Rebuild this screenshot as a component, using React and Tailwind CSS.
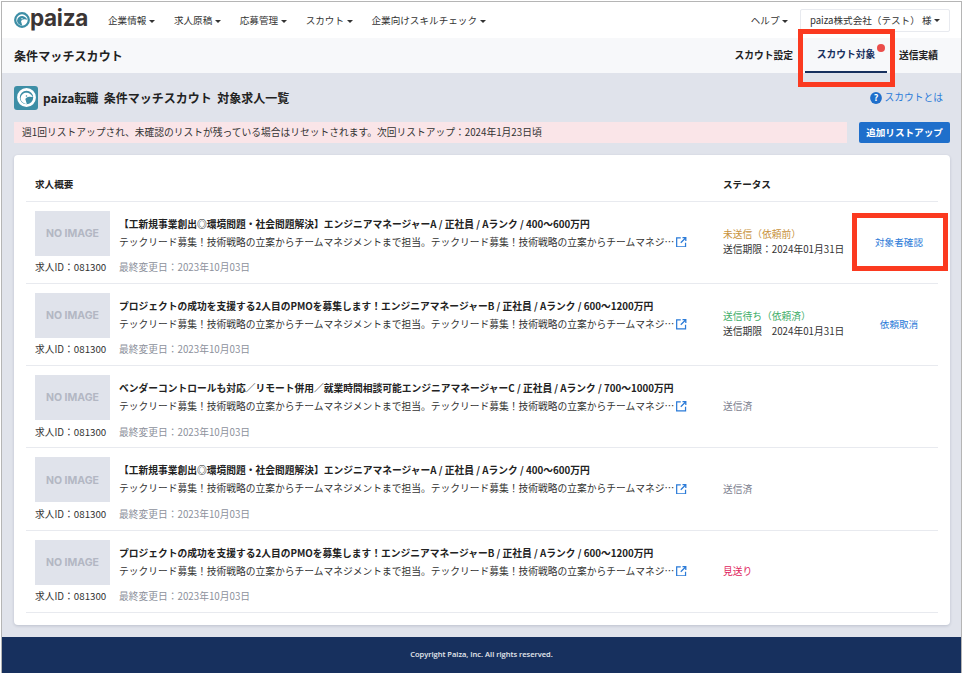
import React from "react";

const Caret = () => (
  <span className="ml-[2.5px] inline-block w-0 h-0 border-x-[3px] border-x-transparent border-t-[3px] border-t-[#333] align-middle" />
);

const PaizaMark = ({ size, bg, fg }) => (
  <svg width={size} height={size} viewBox="0 0 24 24" className="shrink-0">
    <circle cx="12" cy="12" r="10.200" fill="none" stroke={fg} strokeWidth="3.400" />
    <path d="M4.500 13.500 C5 8 9 5.500 13 6 C16 6.400 18.500 8.500 20 11.500 L16 11 C13.500 10.800 11.500 12 10.500 14 L12.500 20.500 C8 19.500 5 17 4.500 13.500 Z" fill={fg} />
    <circle cx="12" cy="10" r="1" fill={bg} />
  </svg>
);

const Ext = () => (
  <svg width="10.500" height="10.500" viewBox="0 0 11 11" fill="none" stroke="#2b7bd8" strokeWidth="1.300" className="shrink-0 ml-[2px]">
    <path d="M5 1H.7v9.300H10V6" />
    <path d="M6.800.7H10.300V4.200M10 1L5 6" />
  </svg>
);

const desc = "テックリード募集！技術戦略の立案からチームマネジメントまで担当。テックリード募集！技術戦略の立案からチームマネジ…";

const rows = [
  { title: "【工新規事業創出◎環境問題・社会問題解決】エンジニアマネージャーA / 正社員 / Aランク / 400〜600万円", status: "未送信（依頼前）", color: "text-[#c8923c]", limit: "送信期限：2024年01月31日", action: "対象者確認" },
  { title: "プロジェクトの成功を支援する2人目のPMOを募集します！エンジニアマネージャーB / 正社員 / Aランク / 600〜1200万円", status: "送信待ち（依頼済）", color: "text-[#3fae6a]", limit: "送信期限　2024年01月31日", action: "依頼取消" },
  { title: "ベンダーコントロールも対応／リモート併用／就業時間相談可能エンジニアマネージャーC / 正社員 / Aランク / 700〜1000万円", status: "送信済", color: "text-[#7d8290]" },
  { title: "【工新規事業創出◎環境問題・社会問題解決】エンジニアマネージャーA / 正社員 / Aランク / 400〜600万円", status: "送信済", color: "text-[#7d8290]" },
  { title: "プロジェクトの成功を支援する2人目のPMOを募集します！エンジニアマネージャーB / 正社員 / Aランク / 600〜1200万円", status: "見送り", color: "text-[#e0245e]" },
];

const nav = ["企業情報", "求人原稿", "応募管理", "スカウト", "企業向けスキルチェック"];

function Row({ r }) {
  return (
    <div className="flex h-[82.3px] border-b border-[#e8eaef] pl-[9px]">
      <div className="w-[84px] shrink-0 pt-[9px]">
        <div className="w-[75px] h-[45px] pt-[1px] bg-[#e0e3eb] flex items-center justify-center text-[10.5px] font-bold text-[#b3b7c3] font-['Inter','Noto_Sans',sans-serif]">NO IMAGE</div>
        <div className="mt-[4.5px] text-[9.75px] leading-[14px] text-[#333] whitespace-nowrap">求人ID：081300</div>
      </div>
      <div className="w-[604px] shrink-0 pt-[9px]">
        <div className="h-[45px] flex flex-col justify-center gap-[3px]">
          <div className="text-[9.75px] leading-[15px] font-bold text-[#222] whitespace-nowrap">{r.title}</div>
          <div className="flex items-center text-[9.75px] leading-[15px] text-[#333] whitespace-nowrap">
            <span>{desc}</span>
            <Ext />
          </div>
        </div>
        <div className="mt-[4.5px] text-[9.75px] leading-[14px] text-[#8d919c]">最終変更日：2023年10月03日</div>
      </div>
      <div className="w-[129px] shrink-0 flex flex-col justify-center text-[9.75px] leading-[15px]">
        <div className={r.color}>{r.status}</div>
        {r.limit && <div className="text-[#333] whitespace-nowrap">{r.limit}</div>}
      </div>
      {r.action && (
        <div className="flex-1 flex items-center justify-center pl-[8px] text-[9.6px] text-[#2b7bd8]">{r.action}</div>
      )}
    </div>
  );
}

export default function App() {
  return (
    <div className="relative w-[963px] h-[676px] bg-white overflow-hidden font-['Noto_Sans_CJK_JP','Noto_Sans',sans-serif]">
      <div className="ml-[1px] mt-[1px] w-[961px] h-[672px] border-t border-x border-[#b5b5b5] bg-[#e0e3eb] flex flex-col">
        <header className="h-[36px] shrink-0 bg-white flex items-center pl-[12px] pr-[11px]">
          <div className="flex items-center w-[94px]">
            <PaizaMark size={16} bg="#fff" fg="#3d8ea6" />
            <span className="text-[22.5px] leading-none font-bold text-[#3b3535] font-['Inter',sans-serif] -mt-[3px] tracking-[-0.3px]">paiza</span>
          </div>
          <nav className="flex gap-[19px] text-[9.6px] text-[#333]">
            {nav.map((n) => (
              <span key={n} className="whitespace-nowrap">{n}<Caret /></span>
            ))}
          </nav>
          <div className="ml-auto flex items-center text-[9.6px] text-[#333]">
            <span className="mr-[12px]">ヘルプ<Caret /></span>
            <span className="h-[23px] w-[150px] bg-white border border-[#e8eaef] rounded-[2px] flex items-center justify-center whitespace-pre">paiza株式会社（テスト） 様<Caret /></span>
          </div>
        </header>
        <div className="h-[35px] shrink-0 bg-[#f7f8fa] flex items-center justify-between pl-[12px] pr-[23px]">
          <h1 className="text-[12px] font-bold text-[#222] tracking-[0.1px]">条件マッチスカウト</h1>
          <div className="flex h-full items-center text-[9.75px] font-bold text-[#222]">
            <span className="mr-[12px]">スカウト設定</span>
            <span className="relative h-full w-[82px] flex items-center justify-center text-[#17305e] border-b-2 border-[#17305e]">
              スカウト対象
              <span className="absolute right-[2px] top-[6px] w-[8px] h-[8px] rounded-full bg-[#eb4d4b]" />
            </span>
            <span className="ml-[12px]">送信実績</span>
          </div>
        </div>
        <main className="flex-1 pl-[12px] pr-[11px]">
          <div className="h-[49px] flex items-center justify-between">
            <div className="flex items-center gap-[5px]">
              <div className="w-[24px] h-[24px] rounded-[3px] bg-[#3d8ea6] flex items-center justify-center">
                <PaizaMark size={19} bg="#3d8ea6" fg="#fff" />
              </div>
              <h2 className="text-[12px] font-bold text-[#222] whitespace-pre">paiza転職  条件マッチスカウト  対象求人一覧</h2>
            </div>
            <div className="flex items-center gap-[3px] mr-[7px] text-[9.75px] text-[#2b7bd8]">
              <svg width="12" height="12" viewBox="0 0 12 12"><circle cx="6" cy="6" r="5.900" fill="#1f6fcb" /><text x="6" y="9.200" fontSize="9" fontWeight="700" textAnchor="middle" fill="#fff">?</text></svg>
              スカウトとは
            </div>
          </div>
          <div className="flex items-center justify-between">
            <div className="w-[833px] h-[21px] bg-[#fae5e8] pl-[8px] flex items-center text-[9.75px] text-[#333] whitespace-nowrap">週1回リストアップされ、未確認のリストが残っている場合はリセットされます。次回リストアップ：2024年1月23日頃</div>
            <button className="w-[91px] h-[21px] bg-[#1f6fcb] rounded-[2px] text-[9.6px] font-bold text-white">追加リストアップ</button>
          </div>
          <section className="mt-[12px] h-[470px] bg-white rounded-[4px] shadow-[0_1px_3px_rgba(30,40,70,0.18)] pl-[12px] pr-[12px]">
            <div className="h-[46.5px] flex items-end border-b border-[#e8eaef] pl-[9px] pb-[8.5px] text-[9.6px] leading-[15px] font-bold text-[#222]">
              <span className="w-[688px]">求人概要</span>
              <span>ステータス</span>
            </div>
            {rows.map((r, i) => <Row key={i} r={r} />)}
          </section>
        </main>
        <footer className="h-[36px] shrink-0 bg-[#17305e] flex items-center justify-center text-[7.5px] font-semibold text-white/90 font-['Open_Sans',sans-serif]">Copyright Paiza, Inc. All rights reserved.</footer>
      </div>
      <div className="absolute left-[798px] top-[29px] w-[97px] h-[58px] border-[5px] border-[#fb3a20]" />
      <div className="absolute left-[852px] top-[213px] w-[96px] h-[58px] border-[5px] border-[#fb3a20]" />
    </div>
  );
}
